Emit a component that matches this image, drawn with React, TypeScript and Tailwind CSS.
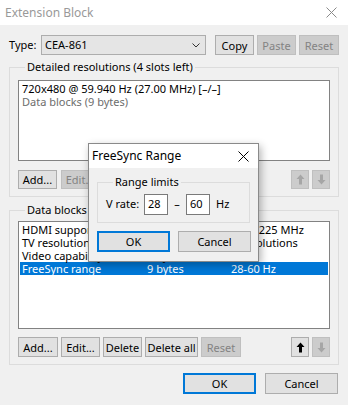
import React from "react";

type BtnProps = {
  label?: React.ReactNode;
  w: string;
  h?: string;
  disabled?: boolean;
  primary?: boolean;
};

function Btn({ label, w, h = "h-[20px]", disabled, primary }: BtnProps) {
  const base = `${w} ${h} flex items-center justify-center shrink-0 leading-none whitespace-nowrap`;
  if (disabled) {
    return <div className={`${base} bg-[#cccccc] border border-[#bfbfbf] text-[#838383]`}>{label}</div>;
  }
  if (primary) {
    return <div className={`${base} bg-[#e1e1e1] border-2 border-[#0078d7] text-black`}>{label}</div>;
  }
  return <div className={`${base} bg-[#e1e1e1] border border-[#adadad] text-black`}>{label}</div>;
}

function Arrow({ down, color }: { down?: boolean; color: string }) {
  return (
    <svg width="9" height="11" viewBox="0 0 9 11" className={down ? "rotate-180" : ""}>
      <path d="M4.5 0.5 L8.5 5 L6 5 L6 10.5 L3 10.5 L3 5 L0.5 5 Z" fill={color} />
    </svg>
  );
}

function CloseX({ color }: { color: string }) {
  return (
    <svg width="11" height="11" viewBox="0 0 11 11">
      <path d="M0.5 0.5 L10.5 10.5 M10.5 0.5 L0.5 10.5" stroke={color} strokeWidth="1" />
    </svg>
  );
}

function Group({ title, children, className = "" }: { title: string; children: React.ReactNode; className?: string }) {
  return (
    <fieldset className={`border border-[#dcdcdc] px-[8px] ${className}`}>
      <legend className="ml-[7px] px-[2px] leading-[14px] whitespace-nowrap">{title}</legend>
      {children}
    </fieldset>
  );
}

const blocks = [
  { name: "HDMI support", size: "7 bytes", info: "Max: 225 MHz" },
  { name: "TV resolutions", size: "5 bytes", info: "4 resolutions" },
  { name: "Video capability", size: "3 bytes", info: "" },
  { name: "FreeSync range", size: "9 bytes", info: "28-60 Hz", selected: true },
];

export default function App() {
  return (
    <div className="relative w-[348px] h-[405px] overflow-hidden bg-[#f0f0f0] text-[11px] text-black whitespace-nowrap font-['Segoe_UI','Noto_Sans',sans-serif]">
      {/* Title bar */}
      <div className="h-[25px] bg-white flex items-center justify-between pl-[5px] pr-[11px]">
        <span className="text-[#999999] text-[12px]">Extension Block</span>
        <CloseX color="#8a8a8a" />
      </div>

      <div className="px-[9px] pt-[10px]">
        {/* Type row */}
        <div className="flex items-center h-[20px]">
          <span className="w-[32px]">Type:</span>
          <div className="w-[165px] h-[20px] bg-[#e5e5e5] border border-[#adadad] flex items-center justify-between pl-[3px] pr-[5px]">
            <span>CEA-861</span>
            <svg width="8" height="5" viewBox="0 0 8 5">
              <path d="M0.5 0.5 L4 4 L7.5 0.5" stroke="#333" fill="none" />
            </svg>
          </div>
          <div className="ml-[9px] flex gap-[3px]">
            <Btn label="Copy" w="w-[39px]" />
            <Btn label="Paste" w="w-[39px]" disabled />
            <Btn label="Reset" w="w-[40px]" disabled />
          </div>
        </div>

        {/* Detailed resolutions */}
        <Group title="Detailed resolutions (4 slots left)" className="mt-[5px] pb-[7px]">
          <div className="mt-[6px] h-[81px] bg-white border border-[#828282] pt-[1px] pl-[3px]">
            <div className="h-[13px] leading-[13px]">720x480 @ 59.940 Hz (27.00 MHz) [–/–]</div>
            <div className="h-[13px] leading-[13px] text-[#6d6d6d]">Data blocks (9 bytes)</div>
          </div>
          <div className="mt-[9px] flex items-center">
            <Btn label="Add..." w="w-[39px]" h="h-[19px]" />
            <div className="ml-[4px]">
              <Btn label="Edit..." w="w-[38px]" h="h-[19px]" disabled />
            </div>
            <div className="ml-auto flex gap-[3px]">
              <Btn label={<Arrow color="#a6a6a6" />} w="w-[18px]" h="h-[19px]" disabled />
              <Btn label={<Arrow down color="#a6a6a6" />} w="w-[18px]" h="h-[19px]" disabled />
            </div>
          </div>
        </Group>

        {/* Data blocks */}
        <Group title="Data blocks (8 bytes left)" className="mt-[6px] pb-[7px]">
          <div className="mt-[4px] h-[108px] bg-white border border-[#828282] pt-[1px] px-[1px]">
            {blocks.map((b) => (
              <div
                key={b.name}
                className={`grid grid-cols-[125px_84px_1fr] h-[13px] leading-[13px] pl-[2px] ${
                  b.selected ? "bg-[#0078d7] text-white" : ""
                }`}
              >
                <span>{b.name}</span>
                <span>{b.size}</span>
                <span>{b.info}</span>
              </div>
            ))}
          </div>
          <div className="mt-[8px] flex items-center">
            <div className="flex gap-[3px]">
              <Btn label="Add..." w="w-[40px]" />
              <Btn label="Edit..." w="w-[39px]" />
              <Btn label="Delete" w="w-[39px]" />
              <Btn label="Delete all" w="w-[53px]" />
              <Btn label="Reset" w="w-[40px]" disabled />
            </div>
            <div className="ml-auto flex gap-[3px]">
              <Btn label={<Arrow color="#000" />} w="w-[18px]" />
              <Btn label={<Arrow down color="#a6a6a6" />} w="w-[18px]" disabled />
            </div>
          </div>
        </Group>

        {/* Dialog buttons */}
        <div className="mt-[8px] flex justify-end gap-[9px] pr-[1px]">
          <Btn label="OK" w="w-[73px]" h="h-[21px]" primary />
          <Btn label="Cancel" w="w-[73px]" h="h-[21px]" />
        </div>
      </div>

      {/* FreeSync Range dialog */}
      <div className="absolute left-[88px] top-[143px] w-[171px] h-[119px] bg-[#f0f0f0] border border-[#8a8a8a] shadow-[2px_3px_8px_rgba(0,0,0,0.3)]">
        <div className="h-[24px] bg-white flex items-center justify-between pl-[3px] pr-[9px]">
          <span className="text-[12px]">FreeSync Range</span>
          <CloseX color="#000" />
        </div>
        <div className="px-[8px]">
          <Group title="Range limits" className="mt-[7px] pb-[7px]">
            <div className="mt-[5px] flex items-center h-[21px]">
              <span className="w-[38px]">V rate:</span>
              <div className="w-[24px] h-[21px] bg-white border border-[#7a7a7a] flex items-center pl-[3px]">28</div>
              <span className="w-[18px] text-center">–</span>
              <div className="w-[24px] h-[21px] bg-white border border-[#7a7a7a] flex items-center pl-[3px]">60</div>
              <span className="ml-[6px]">Hz</span>
            </div>
          </Group>
          <div className="mt-[8px] flex gap-[8px]">
            <Btn label="OK" w="w-[73px]" h="h-[21px]" primary />
            <Btn label="Cancel" w="w-[73px]" h="h-[21px]" />
          </div>
        </div>
      </div>
    </div>
  );
}
